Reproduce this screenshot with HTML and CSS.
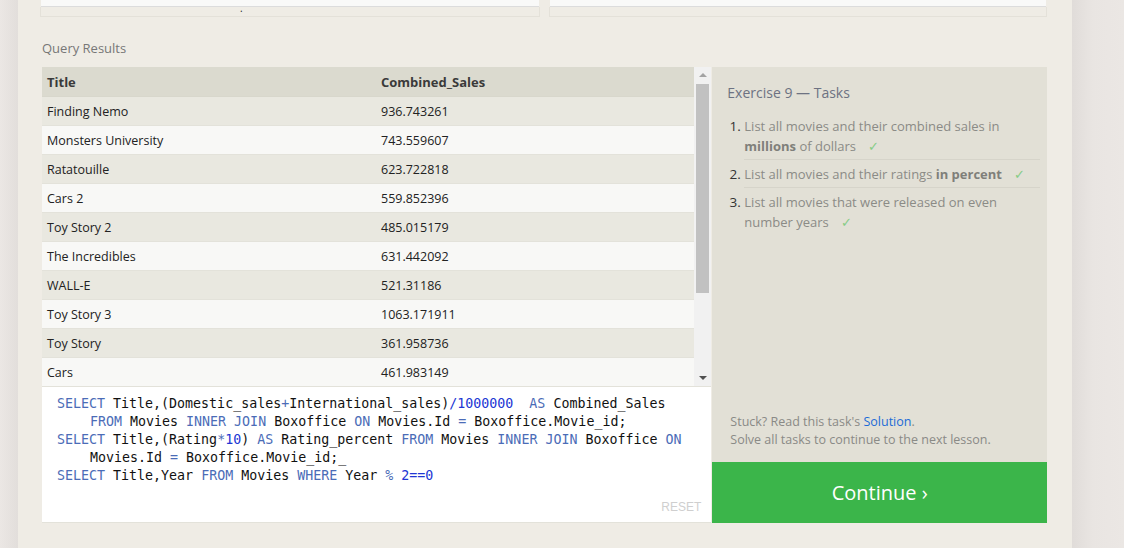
FILE: index.html
```html
<!DOCTYPE html>
<html>
<head>
<meta charset="utf-8">
<link rel="stylesheet" href="styles.css">
</head>
<body>
<div class="page">
  <div class="gutter-left"></div>
  <main class="column">
    <div class="top-boxes">
      <div class="top-box"><div class="top-white"></div><div class="top-strip"><span class="dot">.</span></div></div>
      <div class="top-box"><div class="top-white"></div><div class="top-strip"></div></div>
    </div>
    <div class="results-label">Query Results</div>
    <div class="workspace">
      <div class="left">
        <div class="results">
          <div class="table">
            <div class="row head"><div class="cell">Title</div><div class="cell">Combined_Sales</div></div>
            <div class="row odd"><div class="cell">Finding Nemo</div><div class="cell">936.743261</div></div>
            <div class="row even"><div class="cell">Monsters University</div><div class="cell">743.559607</div></div>
            <div class="row odd"><div class="cell">Ratatouille</div><div class="cell">623.722818</div></div>
            <div class="row even"><div class="cell">Cars 2</div><div class="cell">559.852396</div></div>
            <div class="row odd"><div class="cell">Toy Story 2</div><div class="cell">485.015179</div></div>
            <div class="row even"><div class="cell">The Incredibles</div><div class="cell">631.442092</div></div>
            <div class="row odd"><div class="cell">WALL-E</div><div class="cell">521.31186</div></div>
            <div class="row even"><div class="cell">Toy Story 3</div><div class="cell">1063.171911</div></div>
            <div class="row odd"><div class="cell">Toy Story</div><div class="cell">361.958736</div></div>
            <div class="row even last"><div class="cell">Cars</div><div class="cell">461.983149</div></div>
          </div>
          <div class="scrollbar">
            <div class="arrow up"></div>
            <div class="track"><div class="thumb"></div></div>
            <div class="arrow down"></div>
          </div>
        </div>
        <div class="editor">
          <div class="code">
            <div class="line"><span class="kw">SELECT</span> Title,(Domestic_sales<span class="op">+</span>International_sales)<span class="num">/1000000</span>  <span class="kw">AS</span> Combined_Sales</div>
            <div class="line wrap"><span class="kw">FROM</span> Movies <span class="kw">INNER JOIN</span> Boxoffice <span class="kw">ON</span> Movies.Id <span class="op">=</span> Boxoffice.Movie_id;</div>
            <div class="line"><span class="kw">SELECT</span> Title,(Rating<span class="op">*</span><span class="num">10</span>) <span class="kw">AS</span> Rating_percent <span class="kw">FROM</span> Movies <span class="kw">INNER JOIN</span> Boxoffice <span class="kw">ON</span></div>
            <div class="line wrap">Movies.Id <span class="op">=</span> Boxoffice.Movie_id;_</div>
            <div class="line"><span class="kw">SELECT</span> Title,Year <span class="kw">FROM</span> Movies <span class="kw">WHERE</span> Year <span class="op">%</span> <span class="num">2==0</span></div>
          </div>
          <div class="reset">RESET</div>
        </div>
      </div>
      <aside class="right">
        <div class="tasks">
          <div class="tasks-title">Exercise 9 — Tasks</div>
          <ol class="task-list">
            <li>List all movies and their combined sales in <b>millions</b> of dollars <span class="check">✓</span></li>
            <li>List all movies and their ratings <b>in percent</b> <span class="check">✓</span></li>
            <li>List all movies that were released on even number years <span class="check">✓</span></li>
          </ol>
          <div class="help">
            <div>Stuck? Read this task's <a class="link">Solution</a>.</div>
            <div>Solve all tasks to continue to the next lesson.</div>
          </div>
        </div>
        <div class="continue">Continue ›</div>
      </aside>
    </div>
  </main>
  <div class="gutter-right"></div>
</div>
</body>
</html>
```
FILE: styles.css
```css
html, body {
  margin: 0;
  padding: 0;
}
body {
  width: 1124px;
  height: 548px;
  overflow: hidden;
  background: #e9e5e2;
  font-family: "Open Sans", "Liberation Sans", sans-serif;
}
.page {
  display: flex;
  height: 548px;
}
.gutter-left {
  width: 18px;
  background: linear-gradient(to right, #ebe7e4, #e2dedb);
}
.gutter-right {
  flex: 1;
  background: linear-gradient(to right, #e0dcd9, #e9e5e2 40%, #ebe7e4);
}
.column {
  width: 1054px;
  background: #efece5;
  padding: 0 0 0 22px;
  box-sizing: border-box;
}
.top-boxes {
  display: grid;
  grid-template-columns: 500px 498px;
  column-gap: 9px;
}
.top-white {
  height: 6px;
  background: #f9f9f8;
  border-bottom: 1px solid #dcdcdc;
  margin: 0 1px;
}
.top-strip {
  height: 9px;
  border: 1px solid #e4e1d9;
  border-top: none;
  position: relative;
}
.dot {
  position: absolute;
  left: 199px;
  top: -6px;
  font-size: 10px;
  color: #222;
}
.results-label {
  margin: 22px 0 0 2px;
  height: 18px;
  line-height: 18px;
  font-size: 13px;
  color: #777;
}
.workspace {
  margin: 10px 0 0 2px;
  width: 1005px;
  height: 456px;
  display: flex;
}
.left {
  width: 670px;
  display: flex;
  flex-direction: column;
}
.results {
  display: flex;
  height: 319px;
  overflow: hidden;
  flex-shrink: 0;
}
.table {
  flex: 1;
}
.row {
  display: grid;
  grid-template-columns: 334px 1fr;
  height: 28px;
  border-bottom: 1px solid #e3e2da;
  align-items: center;
  font-size: 12.5px;
  color: #222;
}
.row .cell {
  padding-left: 5px;
}
.row.head {
  height: 29px;
  background: #dbdacf;
  border-bottom: 1px solid #d8d7cc;
  font-weight: 700;
  font-size: 13px;
  color: #3a3a3a;
}
.row.odd { background: #e9e8e0; }
.row.even { background: #f8f8f6; }
.row.last { border-bottom: none; }
.scrollbar {
  width: 17px;
  background: #f1f1f1;
  display: flex;
  flex-direction: column;
}
.arrow {
  height: 17px;
  position: relative;
}
.arrow::after {
  content: "";
  position: absolute;
  left: 5px;
  width: 0;
  height: 0;
  border-left: 4px solid transparent;
  border-right: 4px solid transparent;
}
.arrow.up::after {
  top: 6px;
  border-bottom: 4px solid #a3a3a3;
}
.arrow.down::after {
  top: 7px;
  border-top: 4px solid #505050;
}
.track {
  flex: 1;
  padding: 0 2px;
}
.thumb {
  height: 209px;
  background: #c1c1c1;
}
.editor {
  flex: 1;
  background: #ffffff;
  border-top: 1px solid #e3e2da;
  border-bottom: 1px solid #e3e2da;
  position: relative;
  padding: 8px 0 0 15px;
}
.code {
  font-family: "DejaVu Sans Mono", "Liberation Mono", monospace;
  font-size: 13.3px;
  line-height: 18px;
  color: #111;
}
.line {
  white-space: pre;
}
.line.wrap {
  padding-left: 33px;
}
.kw { color: #4b6cb7; }
.op { color: #4b6cb7; }
.num { color: #2136d4; }
.reset {
  position: absolute;
  right: 10px;
  bottom: 8px;
  font-family: "Liberation Sans", "Open Sans", sans-serif;
  font-size: 12px;
  color: #cfcfcf;
}
.right {
  width: 335px;
  margin-left: 1px;
  display: flex;
  flex-direction: column;
}
.tasks {
  flex: 1;
  background: #e2e0d6;
  display: flex;
  flex-direction: column;
  padding: 16px 7px 13px 15px;
}
.tasks-title {
  font-size: 14px;
  line-height: 20px;
  color: #6d7282;
}
.task-list {
  margin: 9px 0 0 0;
  padding-left: 17px;
  font-size: 13px;
  line-height: 20px;
  color: #8b8b86;
}
.task-list li {
  padding: 4px 0 3px;
  border-bottom: 1px solid #d6d4ca;
}
.task-list li::marker {
  color: #333;
  font-size: 13.5px;
}
.task-list li:last-child {
  border-bottom: none;
}
.task-list b {
  color: #7f7f7a;
  font-weight: 700;
}
.check {
  color: #86cc86;
  margin-left: 9px;
}
.help {
  margin-top: auto;
  padding-left: 3px;
  font-size: 12.5px;
  line-height: 18px;
  color: #8a8a86;
}
.link {
  color: #1b6bd6;
}
.continue {
  height: 61px;
  flex-shrink: 0;
  background: #3bb54a;
  color: #ffffff;
  font-size: 20px;
  display: flex;
  align-items: center;
  justify-content: center;
}
```
